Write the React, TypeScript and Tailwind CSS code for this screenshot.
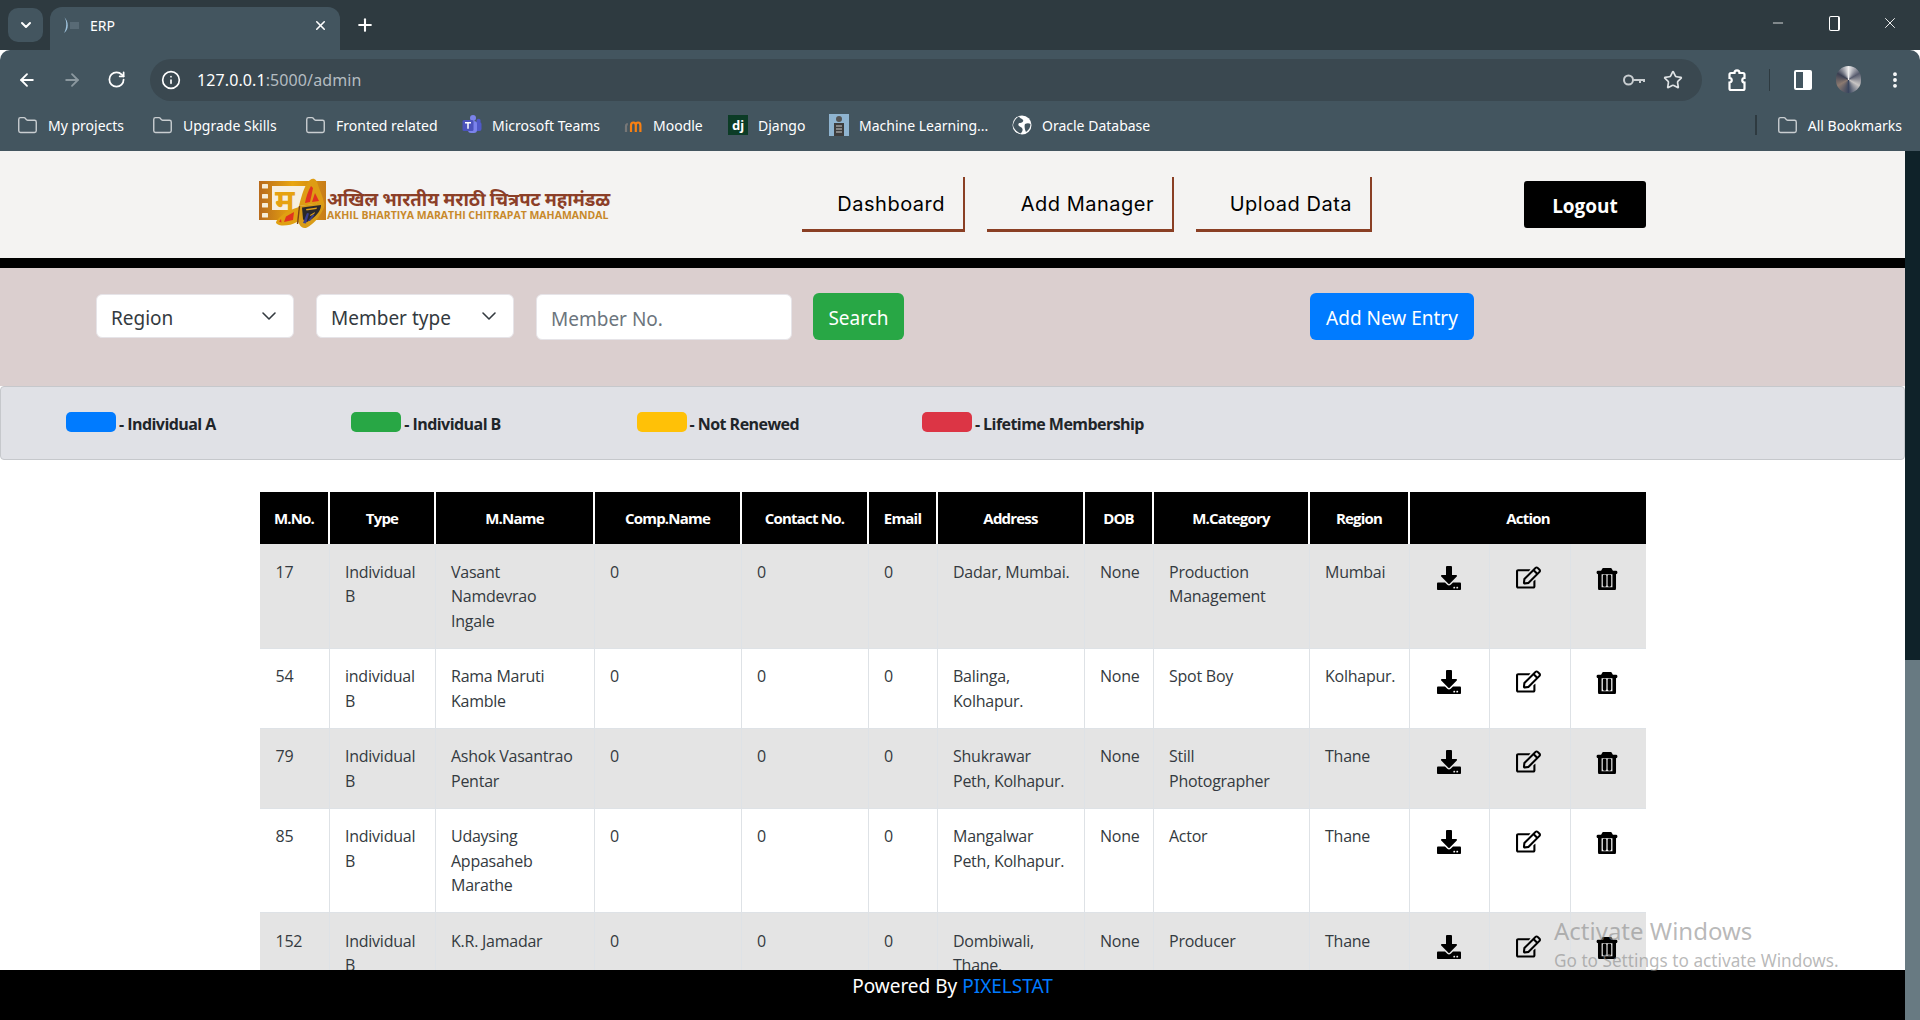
import { ArrowLeft, ArrowRight, ChevronDown, Folder, Info, Minus, MoreVertical, Plus, RotateCw, Star, X } from 'lucide-react';
import { FaDownload, FaRegEdit, FaRegTrashAlt } from 'react-icons/fa';

const bookmarks = [
  { label: 'My projects', icon: 'folder', cls: 'w-[135px]' },
  { label: 'Upgrade Skills', icon: 'folder', cls: 'w-[153px]' },
  { label: 'Fronted related', icon: 'folder', cls: 'w-[157px]' },
  { label: 'Microsoft Teams', icon: 'teams', cls: 'w-[161px]' },
  { label: 'Moodle', icon: 'moodle', cls: 'w-[105px]' },
  { label: 'Django', icon: 'dj', cls: 'w-[101px]' },
  { label: 'Machine Learning...', icon: 'ml', cls: 'w-[183px]' },
  { label: 'Oracle Database', icon: 'globe', cls: 'w-[150px]' },
];

const navLinks = [
  { label: 'Dashboard', cls: 'w-[163px]' },
  { label: 'Add Manager', cls: 'w-[187px]' },
  { label: 'Upload Data', cls: 'w-[176px]' },
];

const legend = [
  { label: '- Individual A', color: 'bg-[#007bff]' },
  { label: '- Individual B', color: 'bg-[#28a745]' },
  { label: '- Not Renewed', color: 'bg-[#ffc107]' },
  { label: '- Lifetime Membership', color: 'bg-[#dc3545]' },
];

const headers = ['M.No.', 'Type', 'M.Name', 'Comp.Name', 'Contact No.', 'Email', 'Address', 'DOB', 'M.Category', 'Region'];
const colWidths = ['w-[69px]', 'w-[106px]', 'w-[159px]', 'w-[147px]', 'w-[127px]', 'w-[69px]', 'w-[147px]', 'w-[69px]', 'w-[156px]', 'w-[100px]', 'w-[80px]', 'w-[81px]', 'w-[76px]'];

const rows = [
  { no: '17', type: 'Individual\nB', name: 'Vasant\nNamdevrao\nIngale', address: 'Dadar, Mumbai.', category: 'Production\nManagement', region: 'Mumbai' },
  { no: '54', type: 'individual\nB', name: 'Rama Maruti\nKamble', address: 'Balinga,\nKolhapur.', category: 'Spot Boy', region: 'Kolhapur.' },
  { no: '79', type: 'Individual\nB', name: 'Ashok Vasantrao\nPentar', address: 'Shukrawar\nPeth, Kolhapur.', category: 'Still\nPhotographer', region: 'Thane' },
  { no: '85', type: 'Individual\nB', name: 'Udaysing\nAppasaheb\nMarathe', address: 'Mangalwar\nPeth, Kolhapur.', category: 'Actor', region: 'Thane' },
  { no: '152', type: 'Individual\nB', name: 'K.R. Jamadar', address: 'Dombiwali,\nThane.', category: 'Producer', region: 'Thane' },
];

function BookmarkIcon({ kind }: { kind: string }) {
  if (kind === 'folder') return <Folder size={21} strokeWidth={1.6} className="text-[#c9ced1] shrink-0" />;
  if (kind === 'globe') {
    return (
      <svg width="20" height="20" viewBox="0 0 20 20" className="shrink-0">
        <circle cx="10" cy="10" r="9.500" fill="#fff" />
        <path d="M7 1.500c1 2 3 2 4 3.500s-1 3-3 3-2 2-1 3 3 1 3.500 3-1 4-2 4.500C5 17 1.500 14 1 10c1-4 3-7 6-8.500zM13 9c2-1 4-1 5.500 0 0 3-1.500 6-4.500 8-1-2-2-6-1-8z" fill="#43555f" />
      </svg>
    );
  }
  if (kind === 'teams') {
    return (
      <svg width="20" height="22" viewBox="0 0 20 22" className="shrink-0">
        <circle cx="11" cy="4" r="3" fill="#7b83eb" />
        <circle cx="16.500" cy="7" r="2.200" fill="#5059c9" />
        <rect x="10" y="8" width="9.500" height="9" rx="2" fill="#5059c9" />
        <rect x="6" y="7" width="9" height="12" rx="3" fill="#7b83eb" />
        <rect x="0.500" y="6" width="11" height="11" rx="1.500" fill="#4b53bc" />
        <path d="M3 8.700h6M6 8.700v6" stroke="#fff" strokeWidth="1.500" fill="none" />
      </svg>
    );
  }
  if (kind === 'moodle') {
    return (
      <svg width="20" height="18" viewBox="0 0 20 18" className="shrink-0">
        <path d="M3 16V10.500c0-1.500.6-2.300 1.800-2.300" stroke="#777" strokeWidth="2.200" fill="none" />
        <path d="M8 16V9.500c0-2 1-3 2.400-3s2.400 1 2.400 3V16M12.800 16V9.500c0-2 1-3 2.300-3s2.300 1 2.300 3V16" stroke="#f98012" strokeWidth="2.200" fill="none" />
      </svg>
    );
  }
  if (kind === 'dj') {
    return (
      <span className="w-[20px] h-[20px] bg-[#0c3c26] text-white text-[13px] leading-[20px] text-center font-bold shrink-0">dj</span>
    );
  }
  return (
    <svg width="20" height="22" viewBox="0 0 20 22" className="shrink-0">
      <rect width="20" height="22" fill="#8fb4d0" />
      <circle cx="10" cy="5" r="3" fill="#555" />
      <rect x="5" y="9" width="10" height="13" fill="#3d3d3d" />
      <path d="M7 12h6M7 15h6M7 18h6" stroke="#ccc" strokeWidth="1.200" />
    </svg>
  );
}

function Butterfly() {
  return (
    <svg width="70" height="54" viewBox="0 0 70 54" className="shrink-0">
      <defs>
        <linearGradient id="film" x1="0" y1="0" x2="1" y2="0">
          <stop offset="0" stopColor="#b86a1c" />
          <stop offset="0.500" stopColor="#e9a60f" />
          <stop offset="1" stopColor="#c77c18" />
        </linearGradient>
      </defs>
      <rect x="0" y="4" width="67" height="39" fill="url(#film)" />
      <rect x="13" y="9" width="45" height="24" fill="#f6efe0" />
      {[7, 17, 26, 36].map((y) => (
        <rect key={y} x="3" y={y} width="6" height="4.500" rx="0.500" fill="#f7ecd6" />
      ))}
      <text x="16" y="34" fontSize="30" fontWeight="700" fill="#e6a210" fontFamily="'Noto Sans', sans-serif">म</text>
      {/* upper wing */}
      <path d="M40 29C43 17 46 7 51 3 55 0 58 3 59 8 61 14 64 20 65 26z" fill="#de9c14" />
      <path d="M46 26c1-6 3-12 6-17l2 2c-1 5-2 10-3 14zM53 25c1-3 2-6 3-9l4 8z" fill="#e1331f" />
      {/* lower wing */}
      <path d="M40 29L65 25.500c1 3 0 6-2 9-3 6-9 13-15 16-3 1.500-6 0-7.500-3L38 43z" fill="#d99c18" />
      <path d="M43 30.500l19-2.500c0 3-1 5-3 8-3 4-7 7-11 9-2 0-3-1-4-3z" fill="#2b282b" />
      <path d="M44 46l4-10 2 .5-3 10zM49 44l5-7 1.500 1-4.500 6z" fill="#3b3f8f" />
      <path d="M47 32l11-1.500-.5 1.500-10 1.500zM51 38l5-3-.5 1.500-4 2.500z" fill="#e2a21a" />
      {/* left wing */}
      <path d="M40 30C33 32 26 35 21 40c-2 2-4 4-4 5.500 0 1.500 3 3 7 3 5 0 10-1 14-3.500z" fill="#e0a012" />
      <path d="M35 35l-8 4.500-2 5.500 9-2zM22 42l-2 2.500 2.500 1z" fill="#e1331f" />
      <path d="M40.500 29l-2 18" stroke="#7a4514" strokeWidth="1.400" />
    </svg>
  );
}

function Cell({ children, last }: { children: React.ReactNode; last?: boolean }) {
  return <td className={`px-[15.500px] pt-[15.500px] pb-[14.500px] align-top border-b border-[#dee2e6] whitespace-pre ${last ? '' : 'border-r'}`}>{children}</td>;
}

export default function App() {
  return (
    <div className="relative w-[1920px] h-[1020px] overflow-hidden flex flex-col bg-white font-['Liberation_Sans',sans-serif]">
      {/* browser chrome */}
      <div className="h-[50px] bg-[#2e3a40] flex items-end text-white relative font-['Noto_Sans',sans-serif]">
        <div className="ml-[8px] mb-[8px] w-[35px] h-[34px] rounded-[10px] bg-[#43555f] flex items-center justify-center">
          <ChevronDown size={16} strokeWidth={3} />
        </div>
        <div className="ml-[7px] w-[290px] h-[43px] rounded-t-[12px] bg-[#43555f] flex items-center pl-[12px] pr-[12px] pb-[7px]">
          <svg width="18" height="18" viewBox="0 0 18 18" className="shrink-0">
            <path d="M2 1c3 3 3 11 0 16 5-3 5-12 0-16z" fill="#9fc3dd" />
            <rect x="8" y="6" width="9" height="7" fill="#586a75" />
          </svg>
          <span className="ml-[10px] text-[14px] flex-1">ERP</span>
          <X size={15} strokeWidth={2.500} />
        </div>
        <Plus size={20} strokeWidth={2.500} className="ml-[15px] mb-[15px]" />
        <div className="ml-auto flex items-center mb-[18px] pr-[21px]">
          <Minus size={16} strokeWidth={1.200} />
          <div className="ml-[43px] w-[11px] h-[15px] border border-white rounded-[2px] border-r-2" />
          <X size={18} strokeWidth={1.200} className="ml-[41px]" />
        </div>
      </div>
      <div className="h-[51px] pt-[8px] bg-[#43555f] rounded-t-[10px] flex items-center text-white font-['Noto_Sans',sans-serif]">
        <div className="w-[150px] flex items-center pl-[17px] gap-[25px] shrink-0">
          <ArrowLeft size={20} strokeWidth={2.200} />
          <ArrowRight size={20} strokeWidth={2.200} className="text-[#8b989f]" />
          <RotateCw size={19} strokeWidth={2.200} />
        </div>
        <div className="w-[1552px] h-[42px] rounded-full bg-[#3a4850] flex items-center pl-[11px] pr-[19px]">
          <Info size={20} strokeWidth={2} />
          <span className="ml-[16px] text-[16px] flex-1 tracking-[0.1px]">
            127.0.0.1<span className="text-[#b4bcc1]">:5000/admin</span>
          </span>
          <svg width="24" height="20" viewBox="0 0 24 20" fill="none" stroke="#c9ced1" strokeWidth="2" className="mr-[17px]">
            <circle cx="6.500" cy="10" r="4.500" />
            <path d="M11 10h11v2M18 10v3" />
          </svg>
          <Star size={20} strokeWidth={2} className="text-[#dfe3e5]" />
        </div>
        <svg width="22" height="24" viewBox="0 0 22 24" fill="none" stroke="#fff" strokeWidth="2.200" className="ml-[24px]">
          <path d="M5 5h3.500c0-3.500 5-3.500 5 0H17a1.500 1.500 0 0 1 1.500 1.500V10c-3 0-3 4.500 0 4.500v6a1.500 1.500 0 0 1-1.500 1.500H5a1.500 1.500 0 0 1-1.500-1.500v-6c3 0 3-4.500 0-4.500V6.500A1.500 1.500 0 0 1 5 5z" />
        </svg>
        <div className="ml-[21px] w-px h-[22px] bg-[#2e3a40]" />
        <div className="ml-[24px] w-[18px] h-[20px] border-2 border-white rounded-[2px] flex justify-end">
          <div className="w-[7px] bg-white" />
        </div>
        <div className="ml-[24px] w-[25px] h-[27px] rounded-full bg-[conic-gradient(#efeeee,#565a6d,#c9c6c4,#39455e,#8c7a70,#3a3f52,#efeeee)]" />
        <MoreVertical size={20} strokeWidth={2.600} className="ml-[24px]" />
      </div>
      <div className="h-[50px] pb-[2px] bg-[#43555f] flex items-center pl-[17px] text-white text-[14px] font-['Noto_Sans',sans-serif]">
        {bookmarks.map((b) => (
          <div key={b.label} className={`flex items-center gap-[10px] ${b.cls}`}>
            <BookmarkIcon kind={b.icon} />
            <span>{b.label}</span>
          </div>
        ))}
        <div className="ml-auto w-[2px] h-[20px] bg-[#2e3a40]" />
        <div className="ml-[20px] mr-[18px] flex items-center gap-[10px]">
          <BookmarkIcon kind="folder" />
          <span>All Bookmarks</span>
        </div>
      </div>

      <div className="flex-1 flex min-h-0">
        {/* page */}
        <div className="w-[1905px] overflow-hidden">
          <header className="h-[117px] bg-[#f4f3f2] border-b-[10px] border-black flex pl-[259px] pr-[259px] pt-[26px]">
            <div className="w-[543px] flex items-start">
              <Butterfly />
              <div className="ml-[-2px] mt-[10px] font-['Open_Sans',sans-serif] font-bold">
                <div className="text-[18.500px] leading-[22px] text-[#8c3f28] font-['Noto_Sans_CJK_SC','Noto_Sans',sans-serif] whitespace-nowrap">अखिल भारतीय मराठी चित्रपट महामंडळ</div>
                <div className="text-[10.500px] leading-[13px] text-[#c8892a] whitespace-nowrap">AKHIL BHARTIYA MARATHI CHITRAPAT MAHAMANDAL</div>
              </div>
            </div>
            <nav className="flex gap-[22px]">
              {navLinks.map((n) => (
                <a key={n.label} className={`h-[55px] border-r-2 border-b-[3px] border-[#8a3f24] text-right pr-[18px] pt-[13px] text-[20px] leading-[28px] tracking-[0.5px] text-black font-['Inter',sans-serif] ${n.cls}`}>
                  {n.label}
                </a>
              ))}
            </nav>
            <button className="ml-auto mt-[4px] w-[122px] h-[47px] pt-[3px] rounded-[3px] bg-black text-white font-bold text-[19px] font-['Open_Sans',sans-serif]">Logout</button>
          </header>

          <section className="h-[118px] bg-[#dbcfcf] flex items-start pl-[96px] pt-[25px] font-['Noto_Sans',sans-serif] text-[19px]">
            <div className="relative mt-[1px] w-[198px]">
              <select className="appearance-none w-full h-[44px] pt-[4px] bg-white rounded-[6px] pl-[14px] text-[#343a40] border border-[#e6e4e8]">
                <option>Region</option>
              </select>
              <ChevronDown size={24} strokeWidth={1.600} className="absolute right-[13px] top-[10px] text-[#343a40]" />
            </div>
            <div className="relative mt-[1px] ml-[22px] w-[198px]">
              <select className="appearance-none w-full h-[44px] pt-[4px] bg-white rounded-[6px] pl-[14px] text-[#343a40] border border-[#e6e4e8]">
                <option>Member type</option>
              </select>
              <ChevronDown size={24} strokeWidth={1.600} className="absolute right-[13px] top-[10px] text-[#343a40]" />
            </div>
            <input placeholder="Member No." className="mt-[1px] ml-[22px] w-[256px] h-[46px] pt-[3px] bg-white rounded-[6px] pl-[14px] border border-[#e6e4e8] placeholder:text-[#6c757d]" />
            <button className="ml-[21px] w-[91px] h-[47px] pt-[4px] rounded-[6px] bg-[#28a745] text-white">Search</button>
            <button className="ml-[406px] w-[164px] h-[47px] pt-[4px] rounded-[6px] bg-[#007bff] text-white">Add New Entry</button>
          </section>

          <section className="h-[74px] bg-[#e0e1e6] border border-[#c6c8cc] rounded-[4px] flex items-center pl-[65px] mb-[32px] pb-[2px]">
            {legend.map((l) => (
              <div key={l.label} className="w-[285.300px] flex items-center text-[16px] font-bold text-[#212529] font-['Open_Sans',sans-serif]">
                <span className={`w-[50px] h-[20px] rounded-[5px] mr-[3px] ${l.color}`} />
                <span className="pt-[4px] tracking-[-0.55px]">{l.label}</span>
              </div>
            ))}
          </section>

          <table className="ml-[260px] w-[1386px] table-fixed border-collapse text-[16px] leading-[24.500px] tracking-[-0.25px] text-[#343a40] font-['Open_Sans',sans-serif]">
            <colgroup>
              {colWidths.map((w, i) => (
                <col key={i} className={w} />
              ))}
            </colgroup>
            <thead>
              <tr className="h-[52px] bg-black text-white text-[15px] font-bold tracking-[-0.8px]">
                {headers.map((h) => (
                  <th key={h} className="text-center border-r-2 border-white whitespace-nowrap">{h}</th>
                ))}
                <th colSpan={3} className="text-center">Action</th>
              </tr>
            </thead>
            <tbody>
              {rows.map((r, i) => (
                <tr key={r.no} className={i % 2 === 0 ? 'bg-[#e4e4e4]' : 'bg-white'}>
                  <Cell>{r.no}</Cell>
                  <Cell>{r.type}</Cell>
                  <Cell>{r.name}</Cell>
                  <Cell>0</Cell>
                  <Cell>0</Cell>
                  <Cell>0</Cell>
                  <Cell>{r.address}</Cell>
                  <Cell>None</Cell>
                  <Cell>{r.category}</Cell>
                  <Cell>{r.region}</Cell>
                  <Cell><FaDownload size={24} className="ml-[12px] mt-[6px] text-black" /></Cell>
                  <Cell><FaRegEdit size={25} className="ml-[11px] mt-[5px] text-black" /></Cell>
                  <Cell last><FaRegTrashAlt size={22} stroke="currentColor" strokeWidth={36} className="ml-[10px] mt-[8px] text-black" /></Cell>
                </tr>
              ))}
            </tbody>
          </table>
        </div>

        {/* scrollbar */}
        <div className="w-[15px] flex flex-col shrink-0">
          <div className="h-[509px] bg-[#0f2229]" />
          <div className="flex-1 bg-[#687a82]" />
        </div>
      </div>

      {/* fixed footer */}
      <footer className="absolute left-0 bottom-0 w-[1905px] h-[50px] bg-black text-white text-center text-[19px] leading-[32px] font-['Noto_Sans',sans-serif]">
        Powered By <span className="text-[#007bff]">PIXELSTAT</span>
      </footer>

      {/* windows watermark */}
      <div className="absolute left-[1554px] top-[913px] text-[#8a8a8a]/60 font-['Noto_Sans',sans-serif] pointer-events-none whitespace-nowrap">
        <div className="text-[24px] leading-[36px]">Activate Windows</div>
        <div className="text-[17.200px] leading-[24px]">Go to Settings to activate Windows.</div>
      </div>
    </div>
  );
}
